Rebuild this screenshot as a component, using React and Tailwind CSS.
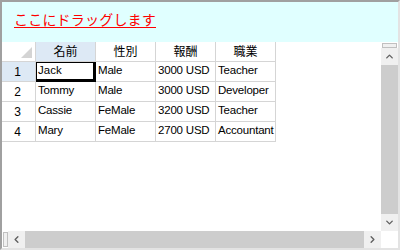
import { ChevronUp, ChevronDown, ChevronLeft, ChevronRight } from 'lucide-react'

const rows = [
  ['Jack', 'Male', '3000 USD', 'Teacher'],
  ['Tommy', 'Male', '3000 USD', 'Developer'],
  ['Cassie', 'FeMale', '3200 USD', 'Teacher'],
  ['Mary', 'FeMale', '2700 USD', 'Accountant'],
]

const headers = ['名前', '性別', '報酬', '職業']

const font = { fontFamily: '"Liberation Sans", "Noto Sans CJK JP", sans-serif' }

export default function App() {
  return (
    <div
      className="w-[400px] h-[250px] flex flex-col bg-white border-t-2 border-l-2 border-t-[#a0a0a0] border-l-[#a0a0a0] border-r-2 border-b-2 border-r-[#e3e3e3] border-b-[#e3e3e3] overflow-hidden"
      style={font}
    >
      <div className="h-[40px] shrink-0 bg-[#e0ffff] pl-[12px] pt-[6px]">
        <span className="text-[14px] leading-[18px] text-[#ff0000] underline underline-offset-2 tracking-[0.2px]">
          ここにドラッグします
        </span>
      </div>
      <div className="flex flex-1 min-h-0">
        <div className="flex-1 bg-white text-[12px] text-black">
          <div className="flex h-[20px]">
            <div className="w-[34px] border-r border-b border-[#d5d5d5] bg-white relative">
              <div className="absolute right-[3px] bottom-[3px] w-0 h-0 border-l-[11px] border-l-transparent border-b-[11px] border-b-[#d4d4d4]" />
            </div>
            {headers.map((h, i) => (
              <div
                key={h}
                className={`w-[60px] border-r border-b border-[#d5d5d5] flex items-center justify-center ${i === 0 ? 'bg-[#dde9f5]' : 'bg-white'}`}
              >
                {h}
              </div>
            ))}
          </div>
          {rows.map((r, ri) => (
            <div key={ri} className="flex h-[20px]">
              <div
                className={`w-[34px] border-r border-b border-[#d5d5d5] flex items-center justify-center pr-[2px] ${ri === 0 ? 'bg-[#dde9f5]' : 'bg-white'}`}
              >
                {ri + 1}
              </div>
              {r.map((c, ci) => (
                <div
                  key={ci}
                  className={
                    ri === 0 && ci === 0
                      ? 'w-[60px] border-t border-l border-r-[3px] border-b-[3px] border-black pl-[1px] text-[11.5px] leading-[14px] whitespace-nowrap'
                      : 'w-[60px] border-r border-b border-[#d5d5d5] pl-[2px] pt-[1px] text-[11.5px] leading-[14px] whitespace-nowrap tracking-[-0.2px]'
                  }
                >
                  {c}
                </div>
              ))}
            </div>
          ))}
        </div>
        <div className="w-[17px] flex flex-col bg-[#f0f0f0]">
          <div className="h-[6px] flex items-center justify-center bg-white">
            <div className="w-[15px] h-[5px] border border-[#c0c0c0] bg-[#f0f0f0]" />
          </div>
          <div className="h-[17px] flex items-center justify-center">
            <ChevronUp className="w-[11px] h-[11px] text-[#606060]" strokeWidth={3} />
          </div>
          <div className="flex-1 bg-[#cdcdcd]" />
          <div className="h-[17px] flex items-center justify-center">
            <ChevronDown className="w-[11px] h-[11px] text-[#606060]" strokeWidth={3} />
          </div>
        </div>
      </div>
      <div className="flex h-[17px] shrink-0">
        <div className="flex-1 flex bg-[#f0f0f0]">
          <div className="w-[6px] flex items-center justify-center bg-white">
            <div className="w-[5px] h-[15px] border border-[#c0c0c0] bg-[#f0f0f0]" />
          </div>
          <div className="w-[17px] flex items-center justify-center">
            <ChevronLeft className="w-[11px] h-[11px] text-[#606060]" strokeWidth={3} />
          </div>
          <div className="flex-1 bg-[#cdcdcd]" />
          <div className="w-[17px] flex items-center justify-center">
            <ChevronRight className="w-[11px] h-[11px] text-[#606060]" strokeWidth={3} />
          </div>
        </div>
        <div className="w-[17px] bg-white" />
      </div>
    </div>
  )
}
